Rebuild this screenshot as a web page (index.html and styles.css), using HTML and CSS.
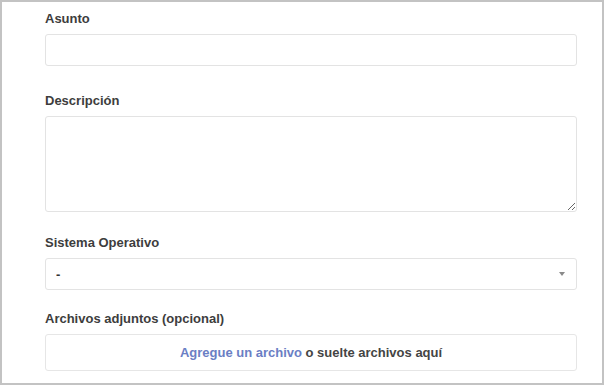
FILE: index.html
```html
<!DOCTYPE html>
<html>
<head>
  <meta charset="utf-8">
  <title>Nuevo ticket</title>
  <link rel="stylesheet" href="styles.css">
</head>
<body>

<div class="frame">
  <form class="ticket-form">
    <div class="field field-subject">
      <label for="asunto">Asunto</label>
      <input type="text" id="asunto" class="control">
    </div>

    <div class="field">
      <label for="descripcion">Descripción</label>
      <textarea id="descripcion" class="control area"></textarea>
    </div>

    <div class="field field-os">
      <label for="so">Sistema Operativo</label>
      <div class="select-wrap">
        <select id="so" class="control select">
          <option>-</option>
        </select>
        <span class="caret"></span>
      </div>
    </div>

    <div class="field">
      <label>Archivos adjuntos (opcional)</label>
      <div class="dropzone">
        <a href="#">Agregue un archivo</a> o suelte archivos aquí
      </div>
    </div>
  </form>
</div>

</body>
</html>
```

FILE: styles.css
```css
html, body {
  margin: 0;
  height: 100%;
}
body {
  font-family: "Liberation Sans", Arial, sans-serif;
  color: #3a3a3a;
  background: #fff;
}
.frame {
  box-sizing: border-box;
  height: 385px;
  border: 2px solid #c3c3c3;
  overflow: hidden;
}
.ticket-form {
  padding: 8px 25px 0 43px;
}
.field {
  margin-bottom: 22px;
}
.field-subject {
  margin-bottom: 26px;
}
.field-os {
  margin-bottom: 20px;
}
.field label {
  display: block;
  font-size: 13px;
  font-weight: bold;
  line-height: 18px;
  color: #3d3d3d;
  margin-bottom: 6px;
}
.control {
  display: block;
  box-sizing: border-box;
  width: 100%;
  height: 32px;
  margin: 0;
  border: 1px solid #e3e3e3;
  border-radius: 3px;
  background: #fff;
  font-family: "Liberation Sans", Arial, sans-serif;
  font-size: 13px;
  color: #333;
  padding: 0 10px;
  outline: none;
}
.area {
  height: 96px;
  resize: vertical;
}
.select-wrap {
  position: relative;
}
.select {
  -webkit-appearance: none;
  appearance: none;
  font-weight: bold;
}
.caret {
  position: absolute;
  right: 12px;
  top: 14px;
  border-left: 3px solid transparent;
  border-right: 3px solid transparent;
  border-top: 4px solid #8a8a8a;
}
.dropzone {
  box-sizing: border-box;
  height: 37px;
  border: 1px solid #e6e6e6;
  border-radius: 3px;
  text-align: center;
  font-size: 13px;
  font-weight: bold;
  line-height: 35px;
  color: #444;
}
.dropzone a {
  color: #6a7ec4;
  text-decoration: none;
}
```
